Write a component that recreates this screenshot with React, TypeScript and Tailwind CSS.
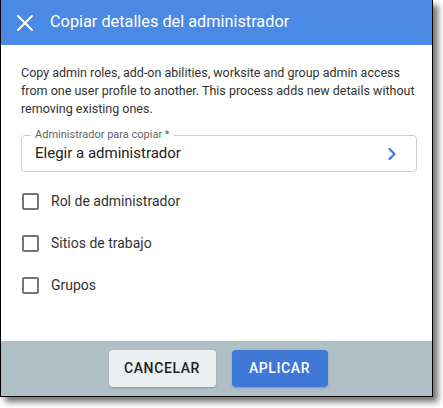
import { X, ChevronRight } from "lucide-react";

const options = ["Rol de administrador", "Sitios de trabajo", "Grupos"];

function CheckRow({ label }: { label: string }) {
  return (
    <label className="flex items-center h-[42px] gap-[12px] pl-[1px] cursor-pointer">
      <span className="w-[17px] h-[17px] rounded-[2px] border-2 border-[#757575] bg-white" />
      <span className="text-[14px] text-[#333]">{label}</span>
    </label>
  );
}

export default function App() {
  return (
    <div className="w-[443px] h-[408px] bg-white font-['Roboto',sans-serif]">
      <div className="w-[433px] h-[397px] flex flex-col bg-white border-x border-b border-black shadow-[5px_5px_6px_rgba(0,0,0,0.55)]">
        <div className="h-[45px] shrink-0 bg-[#4a89e4] flex items-center text-white">
          <X className="ml-[10px] w-[28px] h-[28px]" strokeWidth={1.7} />
          <h1 className="ml-[11px] text-[16.3px] leading-none">Copiar detalles del administrador</h1>
        </div>

        <div className="flex-1 pl-[20px] pr-[15px] pt-[19px]">
          <p className="text-[12.5px] leading-[18px] text-[#333]">
            Copy admin roles, add-on abilities, worksite and group admin access from one user profile to another. This process adds new details without removing existing ones.
          </p>

          <div className="relative mt-[17px] h-[37px] rounded-[4px] border border-[#cfcfcf] flex items-center justify-between pl-[13px] pr-[14px]">
            <span className="absolute -top-[8px] left-[9px] bg-white px-[4px] text-[11px] leading-[14px] text-[#666]">
              Administrador para copiar *
            </span>
            <span className="text-[15px] text-[#222]">Elegir a administrador</span>
            <ChevronRight className="w-[20px] h-[20px] text-[#3a77d8]" strokeWidth={2.6} />
          </div>

          <div className="mt-[8px] flex flex-col">
            {options.map((o) => (
              <CheckRow key={o} label={o} />
            ))}
          </div>
        </div>

        <div className="h-[55px] shrink-0 bg-[#b0bec5] flex items-center justify-center gap-[16px] pl-[3px]">
          <button className="h-[37px] w-[107px] rounded-[4px] bg-[#eceff1] text-[14px] font-medium tracking-[0.6px] text-[#222] shadow-[0_1px_2px_rgba(0,0,0,0.2)]">
            CANCELAR
          </button>
          <button className="h-[37px] w-[96px] rounded-[4px] bg-[#3f78d6] text-[14px] font-medium tracking-[0.6px] text-white shadow-[0_1px_2px_rgba(0,0,0,0.2)]">
            APLICAR
          </button>
        </div>
      </div>
    </div>
  );
}
